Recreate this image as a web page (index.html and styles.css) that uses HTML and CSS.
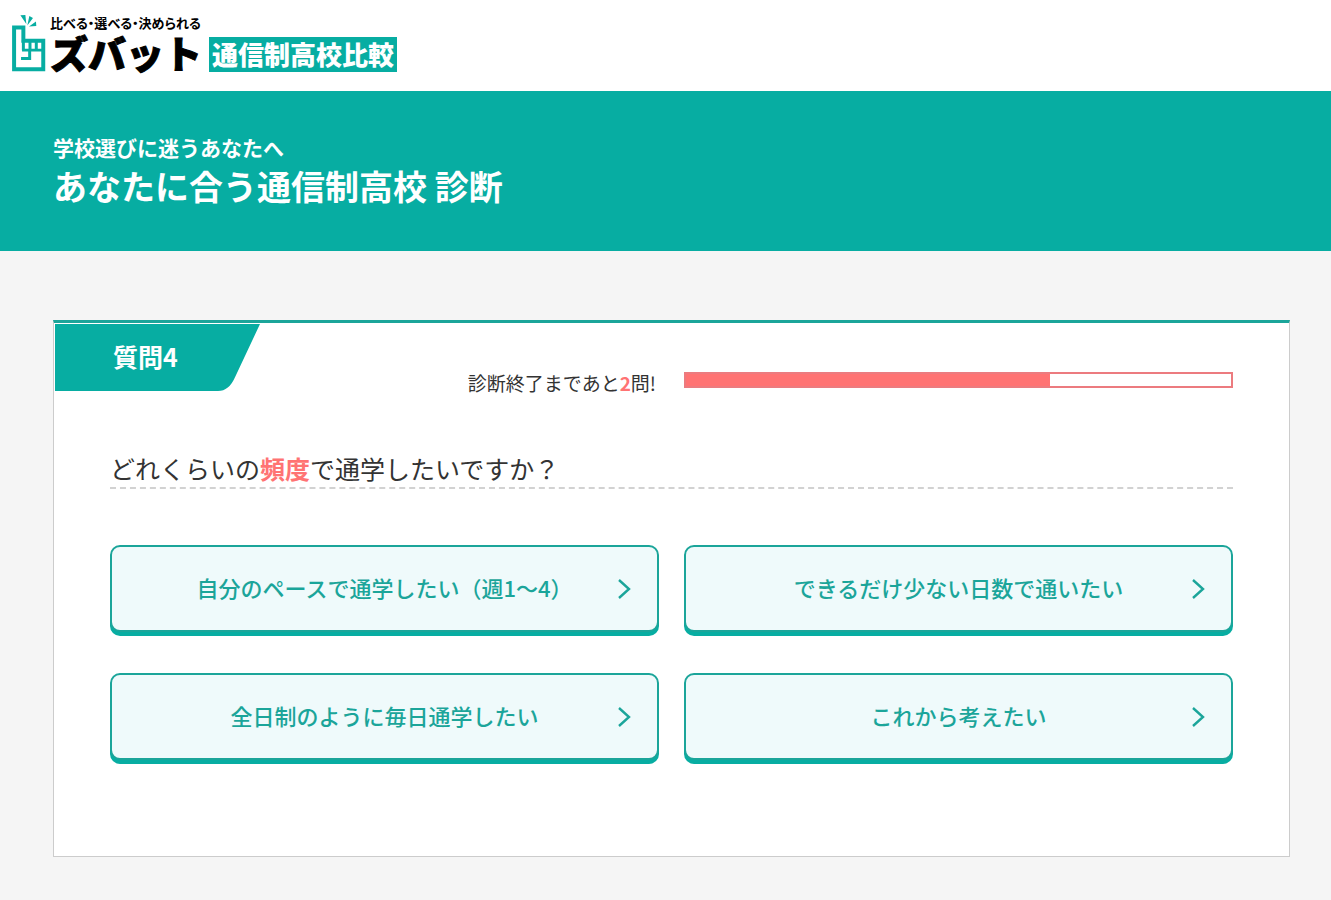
FILE: index.html
```html
<!DOCTYPE html>
<html lang="ja">
<head>
<meta charset="utf-8">
<meta name="viewport" content="width=device-width, initial-scale=1">
<title>あなたに合う通信制高校 診断</title>
<link rel="stylesheet" href="styles.css">
</head>
<body>
<header class="site-header">
  <a class="logo" href="#">
    <svg class="logo-hand" viewBox="36 40 102 175" aria-hidden="true">
      <path fill="none" stroke="currentColor" stroke-width="12" d="M42 81H70V121H130V207H42Z"/>
      <path fill="none" stroke="currentColor" stroke-width="9" d="M70 119V149M90 119V149M109 119V149M66 149H134M89 149V174H63"/>
      <path fill="currentColor" d="M61 44L76 43 79 70ZM88 46L99 52 82 75ZM108 63L109 76 87 78Z"/>
    </svg>
    <span class="logo-words">
      <span class="logo-tagline">比べる・選べる・決められる</span>
      <span class="logo-name">ズバット</span>
    </span>
    <span class="logo-service">通信制高校比較</span>
  </a>
</header>
<section class="banner">
  <h1 class="banner-title"><span class="banner-lead">学校選びに迷うあなたへ</span>あなたに合う通信制高校 診断</h1>
</section>
<main class="page">
  <section class="card">
    <div class="card-head">
      <div class="step">
        <svg class="step-shape" viewBox="0 0 205 68" preserveAspectRatio="none" aria-hidden="true"><path fill="currentColor" d="M0 0H205L180 54Q174 68 163 68H0Z"/></svg>
        <span class="step-label">質問4</span>
      </div>
      <div class="progress">
        <p class="progress-text">診断終了まであと<strong>2</strong>問!</p>
        <div class="progress-bar" role="progressbar" aria-valuenow="4" aria-valuemin="0" aria-valuemax="6" aria-label="診断の進み具合"><div class="progress-fill"></div></div>
      </div>
    </div>
    <div class="card-body">
      <h2 class="question">どれくらいの<strong>頻度</strong>で通学したいですか？</h2>
      <div class="answers">
        <button class="answer" type="button"><span class="answer-text">自分のペースで通学したい（週1～4）</span><svg class="chevron" viewBox="0 0 14 22" aria-hidden="true"><path d="M2 2L12 11L2 20"/></svg></button>
        <button class="answer" type="button"><span class="answer-text">できるだけ少ない日数で通いたい</span><svg class="chevron" viewBox="0 0 14 22" aria-hidden="true"><path d="M2 2L12 11L2 20"/></svg></button>
        <button class="answer" type="button"><span class="answer-text">全日制のように毎日通学したい</span><svg class="chevron" viewBox="0 0 14 22" aria-hidden="true"><path d="M2 2L12 11L2 20"/></svg></button>
        <button class="answer" type="button"><span class="answer-text">これから考えたい</span><svg class="chevron" viewBox="0 0 14 22" aria-hidden="true"><path d="M2 2L12 11L2 20"/></svg></button>
      </div>
    </div>
  </section>
</main>
</body>
</html>
```
FILE: styles.css
```css
:root {
  --teal: #07ada2;
  --teal-line: #1ba59a;
  --coral: #ff7373;
  --ink: #333;
}
* { box-sizing: border-box; }
body {
  margin: 0;
  min-height: 100vh;
  background: #f5f5f5;
  color: var(--ink);
  font-family: "Noto Sans CJK JP", sans-serif;
}
h1, h2, p { margin: 0; }

.site-header {
  padding: 14px 12px 19px;
  background: #fff;
}
.logo {
  display: flex;
  align-items: flex-end;
  width: fit-content;
  color: #000;
  text-decoration: none;
  white-space: nowrap;
}
.logo-hand {
  width: 34px;
  height: 58px;
  margin-right: 4px;
  color: var(--teal);
}
.logo-words {
  display: flex;
  flex-direction: column;
  width: 152px;
  margin-right: 7px;
}
.logo-tagline {
  font-size: 13px;
  font-weight: 700;
  line-height: 18px;
  font-feature-settings: "palt";
}
.logo-name {
  font-size: 38px;
  font-weight: 900;
  line-height: 40px;
  -webkit-text-stroke: 1px currentColor;
}
.logo-service {
  padding: 0 3px 2px;
  background: var(--teal);
  color: #fff;
  font-size: 26px;
  font-weight: 900;
  line-height: 33px;
}

.banner {
  padding: 41px 53px;
  background: var(--teal);
  color: #fff;
}
.banner-title {
  font-size: 34px;
  font-weight: 700;
  line-height: 48px;
}
.banner-lead {
  display: block;
  font-size: 21px;
  line-height: 30px;
}

.page { padding: 69px 41px 42px 53px; }
.card {
  border: 1px solid #ccc;
  border-top: 3px solid var(--teal-line);
  background: #fff;
}
.card-head { display: grid; }
.step, .progress { grid-area: 1 / 1; }
.step {
  display: grid;
  align-self: start;
  width: 205px;
  margin: 1px 0 0 1px;
  color: var(--teal);
}
.step-shape, .step-label { grid-area: 1 / 1; }
.step-shape { width: 100%; height: 67px; }
.step-label {
  padding-right: 24px;
  color: #fff;
  font-size: 25px;
  font-weight: 700;
  line-height: 64px;
  text-align: center;
}
.progress {
  display: grid;
  grid-template-columns: 1fr 1fr;
  column-gap: 25px;
  padding: 46px 56px 0;
}
.progress-text {
  padding-right: 3px;
  font-size: 19px;
  line-height: 28px;
  text-align: right;
}
.progress-text strong, .question strong { color: var(--coral); font-weight: 700; }
.progress-bar {
  height: 16px;
  margin-top: 3px;
  border: 2px solid #ec7b7f;
}
.progress-fill {
  width: 66.7%;
  height: 100%;
  background: var(--coral);
}

.card-body { padding: 52px 56px 96px; }
.question {
  border-bottom: 2px dashed #d2d2d2;
  font-size: 25px;
  font-weight: 400;
  line-height: 38px;
}
.answers {
  display: grid;
  grid-template-columns: 1fr 1fr;
  gap: 41px 25px;
  margin-top: 56px;
}
.answer {
  display: flex;
  align-items: center;
  min-height: 87px;
  padding: 0 26px 0 40px;
  border: 2px solid var(--teal-line);
  border-radius: 10px;
  background: #effafb;
  box-shadow: 0 4px 0 var(--teal);
  color: var(--teal-line);
  font: inherit;
  font-size: 22px;
  font-weight: 500;
  cursor: pointer;
}
.answer-text { flex: 1; padding-bottom: 3px; text-align: center; }
.chevron {
  width: 14px;
  height: 22px;
  fill: none;
  stroke: currentColor;
  stroke-width: 2.4;
}
```
